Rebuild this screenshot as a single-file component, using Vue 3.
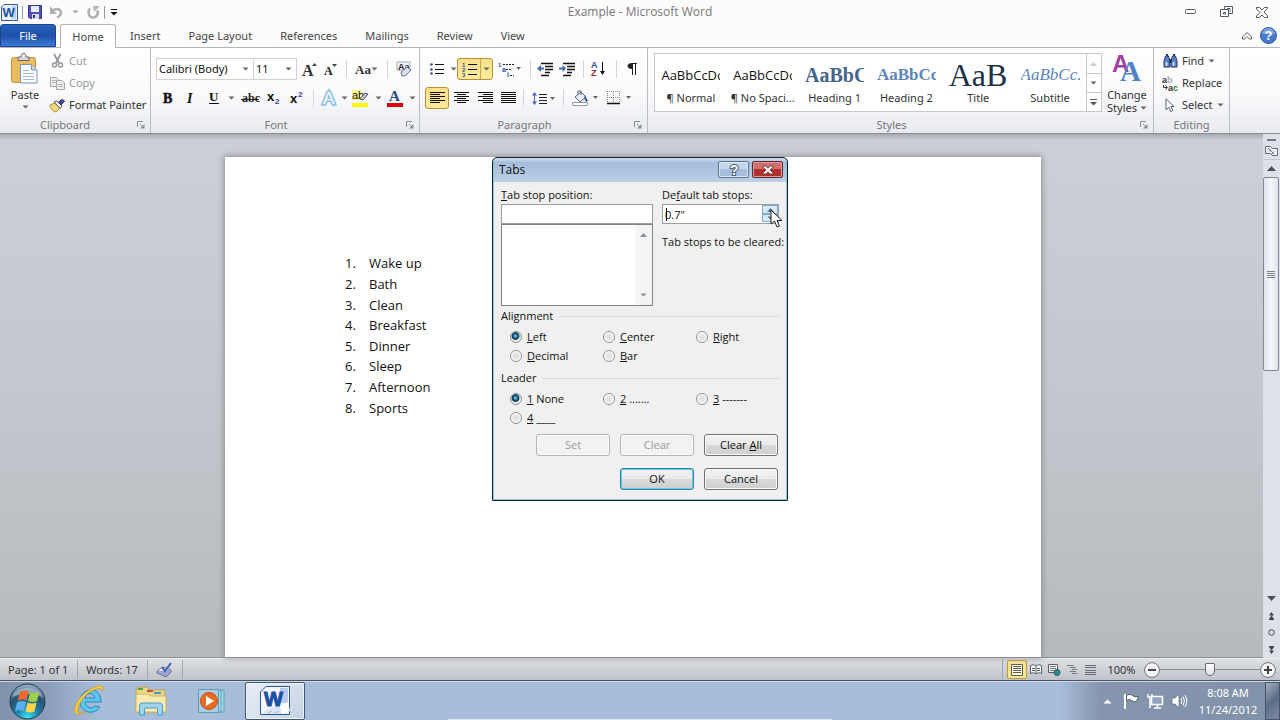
<script setup>
import { h, ref } from 'vue'

const lines = (rows) => `<path d="${rows.map(([x1, x2, y]) => `M${x1} ${y}.5H${x2}`).join('')}" stroke="#111" fill="none"/>`
const glyph = (x, y, size, color, text, extra = '') =>
  `<text x="${x}" y="${y}" font-size="${size}" fill="${color}" ${extra}>${text}</text>`
const serif = 'font-family="Liberation Serif" font-weight="bold"'
const sans = 'font-family="Liberation Sans" font-weight="bold"'

const icons = {
  arrow: [7, 4, '<path d="M0.5 0.5h6l-3 3z" fill="#666"/>'],
  launcher: [8, 8, '<path d="M.5 6V.5H6M3 3l3 3" stroke="#8a8d94" fill="none"/><path d="M7.5 3v4.500H3z" fill="#8a8d94"/>'],
  word: [17, 17, `<path d="M3 .5h13.500v16H.5V3z" fill="#e9f1fb" stroke="#2c5a9c"/><path d="M11 2h4v13h-4z" fill="#b9d1ee"/>${glyph(1.5, 13, 13, '#1c55a5', 'W', sans)}`],
  save: [14, 14, '<path d="M.5.5h13v13H2l-1.500-1.500z" fill="#5350b5" stroke="#37348c"/><path d="M3 1h8v6H3z" fill="#e8ecff"/><path d="M4 9h7v5H4z" fill="#d5d8ee"/><path d="M5 10h2v3H5z" fill="#37348c"/>'],
  undo: [14, 12, '<path d="M3 4.500c4-3 8-1 8 2 0 2-2 4-4 5" stroke="#aeb0b4" stroke-width="2.500" fill="none"/><path d="M0 0v8h7z" fill="#aeb0b4"/>'],
  redo: [13, 13, '<path d="M3 2.500C0 6 2 11.500 6 11.500S12 7 10 4.500" stroke="#aeb0b4" stroke-width="2.500" fill="none"/><path d="M6 0h7l-6 6z" fill="#b5b7bb"/>'],
  custom: [8, 7, '<path d="M1 .5h6" stroke="#111"/><path d="M.5 3h7L4 6.500z" fill="#111"/>'],
  minimize: [12, 6, '<rect x=".5" y=".5" width="10" height="4" rx="1" fill="#fff" stroke="#555a63"/>'],
  restore: [13, 12, '<path d="M4.500.5h8v7h-8z" fill="#fff" stroke="#555a63"/><path d="M.5 3.500h8v7h-8z" fill="#fff" stroke="#555a63"/><path d="M3.500 6.500h2v1.500h-2z" stroke="#555a63" fill="none"/><path d="M7 2.500h3v3" stroke="#555a63" fill="none"/>'],
  close: [12, 11, '<path d="M.5.5h3l2.500 2.500L8.500.5h3v1L8 5l3.500 4v1.500h-3L6 8l-2.500 2.500h-3V9L4 5.500.5 2z" fill="#fff" stroke="#555a63"/>'],
  caret: [10, 8, '<path d="M.5 5L5 .5 9.500 5v2h-2L5 4.500 2.500 7h-2z" fill="#fff" stroke="#555a63"/>'],
  help: [17, 17, `<circle cx="8.500" cy="8.500" r="8" fill="#4a78cb" stroke="#2b58a6"/><path d="M2 7a6.500 6 0 0 1 13 0z" fill="#7ea2e2"/>${glyph(4.6, 13, 13, '#fff', '?', sans)}`],
  paste: [28, 32, '<rect x=".5" y="4.500" width="24" height="25" rx="2" fill="#e8bd62" stroke="#c59542"/><path d="M7 7.500V4h3c0-5 5-5 5 0h3v3.500z" fill="#d4d6da" stroke="#67696e"/><circle cx="12.500" cy="3" r="1.200" fill="#fff"/><path d="M9.500 11.500h11l5.500 5.500v13H9.500z" fill="#fafcff" stroke="#8194b8"/><path d="M20.500 11.500V17H26" fill="#c9d7ed" stroke="#8194b8"/><path d="M12 17.500h6M12 20.500h11M12 23.500h11M12 26.500h11" stroke="#a8b8d4"/>'],
  cut: [11, 14, '<path d="M2 0l5 9M8.500 0L4 9" stroke="#96989d" stroke-width="1.800" fill="none"/><circle cx="2.500" cy="11" r="2" fill="none" stroke="#96989d" stroke-width="1.500"/><circle cx="8.500" cy="11" r="2" fill="none" stroke="#96989d" stroke-width="1.500"/>'],
  copy: [15, 13, '<path d="M.5.5h6L8.500 3v6.500h-8z" fill="#eee" stroke="#a4a6aa"/><path d="M6.500 3.500H12l2.500 2.500v6.500h-8z" fill="#eee" stroke="#a4a6aa"/><path d="M2 3.500h4M2 5.500h4M8 7.500h5M8 9.500h5" stroke="#b4b6ba"/>'],
  painter: [16, 13, '<path d="M1 6l5-2 5 5-4 4C4 12 1 10 1 6z" fill="#efd878" stroke="#b3933a"/><path d="M5 3l3-1 5 5-2 2.500z" fill="#f7f7fb" stroke="#555"/><path d="M9.500 3L13 .5l2.500 1.500L12 6z" fill="#4b4794" stroke="#302d69"/>'],
  grow: [15, 15, `${glyph(0, 14, 16, '#333', 'A', serif)}<path d="M10 4h5l-2.500-3z" fill="#444"/>`],
  shrink: [13, 13, `${glyph(0, 12, 12, '#222', 'A', serif)}<path d="M8 1h5l-2.500 3z" fill="#444"/>`],
  aa: [16, 13, glyph(0, 11, 13, '#333', 'Aa', serif)],
  clear: [17, 16, `<rect x="1" y="1" width="13" height="8" fill="#eef1f8" stroke="#a6adbf"/>${glyph(2, 8.5, 9, '#222', 'Aa', sans)}<path d="M5 11l6-5 4 3-6 6H6z" fill="#d9dff0" stroke="#6b7490"/>`],
  bold: [11, 12, glyph(1, 11, 14, '#111', 'B', `${serif} stroke="#111" stroke-width=".5"`)],
  italic: [10, 12, glyph(2, 11, 14, '#111', 'I', `${serif} font-style="italic"`)],
  under: [12, 14, `${glyph(1, 10, 13, '#111', 'U', serif)}<path d="M1 12.500h10" stroke="#111"/>`],
  strike: [18, 12, `${glyph(1, 10, 12, '#222', 'abc', serif)}<path d="M0 7.500h18" stroke="#222"/>`],
  sub: [14, 14, `${glyph(0, 10, 13, '#111', 'x', sans)}${glyph(8, 13, 8, '#3a3aa8', '2', sans)}`],
  sup: [14, 14, `${glyph(0, 12, 13, '#111', 'x', sans)}${glyph(8, 6, 8, '#3a3aa8', '2', sans)}`],
  effects: [16, 16, glyph(2, 14, 17, '#fff', 'A', 'font-family="Liberation Sans" stroke="#8ec3e6" stroke-width="3.500" paint-order="stroke"')],
  highlight: [18, 17, `<path d="M0 0h9v10H0z" fill="#f9f78c"/>${glyph(0, 9, 11, '#111', 'ab', 'font-family="Liberation Sans"')}<path d="M8 9l5-6 3 1-5 6z" fill="#c5cbdc" stroke="#555"/><path d="M0 13h16v4H0z" fill="#fdfd00"/>`],
  color: [16, 17, `${glyph(2, 11, 15, '#2f477f', 'A', serif)}<path d="M0 13h16v4H0z" fill="#e00008"/>`],
  bullets: [14, 12, '<path d="M5 1.500h9M5 6.500h9M5 10.500h9" stroke="#111"/><g fill="#3a4e8c"><circle cx="1.500" cy="1.500" r="1.300"/><circle cx="1.500" cy="6.500" r="1.300"/><circle cx="1.500" cy="10.500" r="1.300"/></g>'],
  numbers: [15, 15, `<path d="M6 2.500h9M6 7.500h9M6 12.500h9" stroke="#111"/>${glyph(0, 5, 6, '#33509b', '1', sans)}${glyph(0, 10, 6, '#33509b', '2', sans)}${glyph(0, 15, 6, '#33509b', '3', sans)}`],
  multi: [23, 15, `<path d="M5 2.500h11M8 7.500h6M12 13.500h4" stroke="#222" stroke-dasharray="2 1"/>${glyph(0, 5, 6, '#33509b', '1', sans)}${glyph(4, 10, 7, '#33509b', 'a', sans)}${glyph(9, 15, 7, '#33509b', 'i', sans)}<path d="M18 5h5l-2.500 3z" fill="#666"/>`],
  outdent: [16, 13, '<path d="M4 .5h12M8 3.500h8M8 6.500h8M8 9.500h5M4 12.500h8" stroke="#111" stroke-width="1.400"/><path d="M0 5.500L4 2v2.500h3v2H4V9z" fill="#4466b4"/>'],
  indent: [16, 13, '<path d="M4 .5h12M8 3.500h8M8 6.500h8M8 9.500h5M4 12.500h8" stroke="#111" stroke-width="1.400"/><path d="M7 5.500L3.500 2v2.500H0v2h3.500V9z" fill="#4466b4"/>'],
  sort: [15, 16, `${glyph(0, 7, 9, '#33509b', 'A', sans)}${glyph(0, 15, 9, '#9c2f3b', 'Z', sans)}<path d="M11.500 1v12" stroke="#111"/><path d="M9 10h5l-2.500 4z" fill="#111"/>`],
  pilcrow: [10, 13, '<path d="M5 0h5v1H9v11H8V1H6v11H5V6C-1 6-1 0 5 0z" fill="#222"/>'],
  left: [15, 12, lines([[0, 15, 0], [0, 10, 2], [0, 15, 4], [0, 10, 6], [0, 15, 8], [0, 10, 10]])],
  center: [15, 12, lines([[0, 15, 0], [3, 12, 2], [0, 15, 4], [3, 12, 6], [0, 15, 8], [3, 12, 10]])],
  right: [15, 12, lines([[0, 15, 0], [5, 15, 2], [0, 15, 4], [5, 15, 6], [0, 15, 8], [5, 15, 10]])],
  justify: [15, 12, lines([[0, 15, 0], [0, 15, 2], [0, 15, 4], [0, 15, 6], [0, 15, 8], [0, 15, 10]])],
  spacing: [23, 15, '<path d="M7 3.500h8M7 6.500h8M7 9.500h8M7 12.500h8" stroke="#222"/><path d="M2.500 3v9" stroke="#4466b4"/><path d="M0 4.500h5L2.500 1zM0 10.500h5L2.500 14z" fill="#4466b4"/><path d="M18 6h5l-2.500 3z" fill="#666"/>'],
  fill: [26, 17, '<path d="M3 7l6-5 5 5-6 5z" fill="#e8ecf6" stroke="#596683"/><path d="M6 4V1h3v4" fill="none" stroke="#596683"/><path d="M13 5l3 6-2 1-2-4z" fill="#3e61a9"/><path d="M.5 12.500h15v3H.5z" fill="#fff" stroke="#999"/><path d="M21 6h5l-2.500 3z" fill="#666"/>'],
  borders: [26, 14, '<path d="M.5 0v12M6.500 0v12M12.500 0v12M0 .5h13M0 6.500h13" stroke="#888" stroke-dasharray="1 1"/><path d="M0 12.500h13" stroke="#111" stroke-width="1.500"/><path d="M19 5h5l-2.500 3z" fill="#666"/>'],
  styles: [30, 28, `${glyph(0, 18, 24, '#a13fa0', 'A', sans)}${glyph(8, 27, 29, '#4d82cc', 'A', serif)}`],
  find: [15, 14, '<path d="M1 7l1.500-5h3L7 7v6H1zM8 7l1.500-5h3L14 7v6H8z" fill="#5a7fc6" stroke="#27396f"/><path d="M6 5h3v4H6zM3 0h2v2H3zM10 0h2v2h-2z" fill="#27396f"/><path d="M2.500 8h2v4h-2zM9.500 8h2v4h-2z" fill="#c7d8f5"/>'],
  replace: [16, 15, `${glyph(0, 7, 9, '#333', 'a', sans)}${glyph(5, 7, 9, '#aaa', 'b', sans)}${glyph(6, 15, 9, '#333', 'a', sans)}${glyph(11, 15, 9, '#2a8a2a', 'c', sans)}<path d="M1.500 9v2.500H5M3.500 9.500l2 2-2 2" stroke="#333" fill="none"/>`],
  select: [10, 14, '<path d="M1 .8v11l2.800-2.500 2 4.200 2-1-2-4H9z" fill="#fff" stroke="#596075"/>'],
  up: [9, 5, '<path d="M0 5h9L4.500 0z" fill="#4a4e57"/>'],
  down: [9, 5, '<path d="M0 0h9L4.500 5z" fill="#4a4e57"/>'],
  more: [8, 8, '<path d="M0 1.500h7" stroke="#555"/><path d="M0 4h7L3.500 7.500z" fill="#555"/>'],
  ruler: [13, 12, '<path d="M.5 1.500h5l2 2h5v7h-5l-2-2h-5z" fill="#f2f4f8" stroke="#666b75"/><path d="M3 3l6 6M4 6.500l2-2M7 8.500l2-2" stroke="#666b75"/>'],
  prev: [7, 8, '<path d="M1 3.500h5L3.500 0zM1 7h5L3.500 3.500z" fill="#444"/><path d="M1 7.500h5" stroke="#444"/>'],
  browse: [7, 7, '<circle cx="3.500" cy="3.500" r="2.800" fill="#d5d9df" stroke="#555"/>'],
  next: [7, 8, '<path d="M1 .5h5" stroke="#444"/><path d="M1 1h5L3.500 4.500zM1 4.500h5L3.500 8z" fill="#444"/>'],
  proof: [17, 15, '<path d="M1 9l6-4 8 3-5 6z" fill="#fff" stroke="#6b7397"/><path d="M1 9v2l9 4 5-5V8" fill="#9aa5cf" stroke="#6b7397"/><path d="M6 5l3 4 6-8" stroke="#3e5fb0" stroke-width="2" fill="none"/>'],
  print: [12, 12, '<path d="M.5.5h11v11H.5z" fill="#fffdf0" stroke="#5d5a45"/><path d="M2 2.500h8M2 4.500h8M2 6.500h8M2 8.500h8" stroke="#5d5a45"/>'],
  read: [12, 11, '<path d="M.5 1.500c2-1 4-1 5.500.5 1.500-1.500 3.500-1.500 5.500-.5v8c-2-1-4-1-5.500.5-1.500-1.500-3.500-1.500-5.500-.5z" fill="#f7f8fa" stroke="#5a5e66"/><path d="M6 2v8M2 4.500h3M2 6.500h3M7 4.500h3M7 6.500h3" stroke="#5a5e66"/>'],
  web: [13, 12, '<path d="M.5.5h9v8h-9z" fill="#f7f8fa" stroke="#5a5e66"/><path d="M2 2.500h6M2 4.500h6M2 6.500h4" stroke="#777"/><circle cx="9" cy="8.500" r="3" fill="#2c8c88" stroke="#285c6c"/>'],
  outline: [11, 10, '<path d="M0 .5h7M3 2.500h6M5 4.500h5M3 6.500h6M5 8.500h5" stroke="#777b82"/>'],
  draft: [11, 10, '<path d="M0 .5h11M0 2.500h11M0 5.500h11M0 7.500h11M0 9.500h11" stroke="#666a72"/>'],
  minus: [16, 16, '<circle cx="8" cy="8" r="7.400" fill="#f3f4f6" stroke="#6d7178"/><path d="M4 8h8" stroke="#444" stroke-width="2"/>'],
  plus: [16, 16, '<circle cx="8" cy="8" r="7.400" fill="#f3f4f6" stroke="#6d7178"/><path d="M4 8h8M8 4v8" stroke="#444" stroke-width="2"/>'],
  start: [37, 37, '<defs><radialGradient id="orb" cx=".5" cy=".95" r=".9"><stop offset="0" stop-color="#3fe0f2"/><stop offset=".35" stop-color="#1c84ad"/><stop offset=".7" stop-color="#28506f"/><stop offset="1" stop-color="#8fa9bd"/></radialGradient></defs><circle cx="18.500" cy="18.500" r="17.500" fill="url(#orb)" stroke="#26384c"/><path d="M3 14a16.500 14 0 0 1 31 0c-9-4-22-4-31 0z" fill="#c9d8e4" opacity=".5"/><path d="M11 9q4-2.500 8.500-.5l-2 9q-4.500-2-9 .5z" fill="#ec6a2e"/><path d="M21 9q4.500 2 9 0l-2 9q-4.500 2-9 0z" fill="#9ccf4a"/><path d="M8 19.500q4.500-2.500 9-.5l-2 9q-4.500-2-9 .5z" fill="#58aef0"/><path d="M18.500 19.500q4.500 2 9 0l-2 9q-4.500 2-9 0z" fill="#fbd447"/>'],
  ie: [34, 34, '<path d="M27 23c-6 9-20 6-20-6S24 2 27 12c1 3 1 5 1 6H12c1 7 8 7 10 4z M12 14h10c-1-6-9-6-10 0z" fill="#5ec5ee" stroke="#2488bd" fill-rule="evenodd"/><path d="M4 30C-3 27 6 12 16 6s17-6 13 2c1-5-5-4-12 0S3 24 5 28c1 2 5 1 8-1-3 3-7 4-9 3z" fill="#f6cd3e" stroke="#c6981e" stroke-width=".7"/>'],
  folder: [34, 32, '<path d="M2 5l2-3h9l2 3h16v22H2z" fill="#edd787" stroke="#b99f4c"/><path d="M4 3h5v2H4z" fill="#48a852"/><path d="M13 5h6v2h-6z" fill="#c94c3f"/><path d="M20 7h7v2h-7z" fill="#4a91d4"/><path d="M2 9h12l3 2h15v16H2z" fill="#f8eab0" stroke="#cbb468"/><path d="M5.500 30V21q0-3 3-3h17q3 0 3 3v9h-5v-6q0-1-1-1h-11q-1 0-1 1v6z" fill="#9fd4ec" stroke="#509bc2"/>'],
  player: [28, 26, '<path d="M10 2h16v22H10zM8 2h15v22H8z" fill="#a5d7e6" stroke="#5ba4bd"/><path d="M.5 1.500h20v23H.5z" fill="#a9cfe4" stroke="#6898b6"/><circle cx="11" cy="13" r="8.500" fill="#ea6a24" stroke="#c24e12"/><path d="M8 8v10l8-5z" fill="#fff"/>'],
  wordbig: [30, 30, `<path d="M6 .5h23.500v28H.5V6z" fill="#f4f8fe" stroke="#2d5499"/><path d="M20 2h8v15h-8z" fill="#b8c9ea"/><path d="M4 25l14-6 10 6-2 3H4z" fill="#dde5f5"/>${glyph(4, 20, 20, '#1d4fa3', 'W', `${sans} stroke="#1d4fa3"`)}<path d="M20 20l8-4 2 9-8 3z" fill="#fff"/><path d="M8 27l4-2M15 27l4-2" stroke="#9fb2da"/>`],
  trayup: [9, 5, '<path d="M.5 4.500h8L4.500.5z" fill="#fff"/>'],
  flag: [17, 17, '<path d="M2 1v15" stroke="#fff" stroke-width="2"/><path d="M3.500 2q4-1.500 6 .5t6 1l-2 5q-3 1-5-1t-5 0z" fill="#fff" stroke="#4c5c74"/>'],
  network: [16, 16, '<path d="M4.500 3.500h11v8h-11z" fill="#8fa4bd" stroke="#fff" stroke-width="1.500"/><path d="M7 15h7M10.500 12v3" stroke="#fff" stroke-width="1.500"/><path d="M1 1v3h4V1M3 4v11" stroke="#fff" stroke-width="1.500" fill="none"/>'],
  speaker: [16, 16, '<path d="M1 5h3l4-4v14l-4-4H1z" fill="#fff" stroke="#4c5c74" stroke-width=".6"/><path d="M10 5q2 3 0 6M12 3.500q3 4.500 0 9M14 2q3.500 6 0 12" stroke="#fff" fill="none"/>'],
  dlghelp: [12, 14, glyph(2, 12, 14, '#fff', '?', `${sans} stroke="#4c5f7a" stroke-width="2" paint-order="stroke"`)],
  dlgclose: [12, 10, '<path d="M1 1h3l2 2.200L8 1h3v1L8 5l3 3v1H8L6 6.800 4 9H1V8l3-3-3-3z" fill="#fff" stroke="#5f3236" stroke-width=".8"/>'],
  grip: [8, 7, '<path d="M0 .5h8M0 2.500h8M0 4.500h8M0 6.500h8" stroke="#7a808e"/>'],
  small: [7, 4, '<path d="M0 4h7L3.500 0z" fill="#56708f"/>'],
  cursor: [13, 19, '<path d="M1 1v14l3.500-3 2.500 6 2.500-1-2.500-5.500H12z" fill="#fff" stroke="#222"/>'],
}

const Icon = ({ name }) => {
  const [w, ht, body] = icons[name]
  return h('svg', { width: w, height: ht, viewBox: `0 0 ${w} ${ht}`, 'aria-hidden': 'true', innerHTML: body })
}
Icon.props = ['name']

const tabs = ['Insert', 'Page Layout', 'References', 'Mailings', 'Review', 'View']
const font1 = [['grow', 'Grow Font'], ['shrink', 'Shrink Font'], null, ['aa', 'Change Case', 1], null, ['clear', 'Clear Formatting']]
const font2 = [['bold', 'Bold'], ['italic', 'Italic'], ['under', 'Underline'], ['arrow', 'Underline options'], ['strike', 'Strikethrough'], ['sub', 'Subscript'], ['sup', 'Superscript'], null, ['effects', 'Text Effects'], ['arrow', 'Text Effects options'], ['highlight', 'Highlight'], ['arrow', 'Highlight options'], ['color', 'Font Color'], ['arrow', 'Font Color options']]
const para1 = [['bullets', 'Bullets'], ['arrow', 'Bullets options'], ['numbers', 'Numbering', 2], ['multi', 'Multilevel List'], null, ['outdent', 'Decrease Indent'], ['indent', 'Increase Indent'], null, ['sort', 'Sort'], null, ['pilcrow', 'Show Marks']]
const para2 = [['left', 'Align Left', 3], ['center', 'Center'], ['right', 'Align Right'], ['justify', 'Justify'], null, ['spacing', 'Line Spacing'], null, ['fill', 'Shading'], ['borders', 'Borders']]
const gallery = [
  ['normal', 'AaBbCcDc', '¶ Normal'],
  ['normal', 'AaBbCcDc', '¶ No Spaci...'],
  ['h1', 'AaBbCc', 'Heading 1'],
  ['h2', 'AaBbCc', 'Heading 2'],
  ['title', 'AaB', 'Title'],
  ['subtitle', 'AaBbCc.', 'Subtitle'],
]
const items = ['Wake up', 'Bath', 'Clean', 'Breakfast', 'Dinner', 'Sleep', 'Afternoon', 'Sports']
const aligns = [['L', 'eft'], ['C', 'enter'], ['R', 'ight'], ['D', 'ecimal'], ['B', 'ar']]
const leaders = [['1', ' None'], ['2', ' .......'], ['3', ' -------'], ['4', ' ____']]
const align = ref('Left')
const leader = ref('1')
const zoom = ref(50)
</script>

<template>
  <div class="screen">
    <header class="titlebar">
      <div class="quick">
        <Icon name="word" /><i class="bar" />
        <button aria-label="Save"><Icon name="save" /></button>
        <button aria-label="Undo"><Icon name="undo" /></button>
        <button class="faded" aria-label="Undo options"><Icon name="arrow" /></button>
        <button aria-label="Redo"><Icon name="redo" /></button><i class="bar" />
        <button aria-label="Customize"><Icon name="custom" /></button>
      </div>
      <h1>Example - Microsoft Word</h1>
      <div class="wincontrols">
        <button aria-label="Minimize"><Icon name="minimize" /></button>
        <button aria-label="Restore"><Icon name="restore" /></button>
        <button aria-label="Close"><Icon name="close" /></button>
      </div>
    </header>

    <nav class="tabs">
      <button class="file">File</button>
      <button class="active">Home</button>
      <button v-for="t in tabs" :key="t">{{ t }}</button>
      <span class="tabhelp">
        <button aria-label="Minimize ribbon"><Icon name="caret" /></button>
        <button aria-label="Help"><Icon name="help" /></button>
      </span>
    </nav>

    <section class="ribbon">
      <div class="group clipboard">
        <div class="content">
          <button class="paste"><Icon name="paste" /><span>Paste</span><Icon name="arrow" /></button>
          <div class="stack">
            <button disabled><span class="ic"><Icon name="cut" /></span>Cut</button>
            <button disabled><span class="ic"><Icon name="copy" /></span>Copy</button>
            <button><span class="ic"><Icon name="painter" /></span>Format Painter</button>
          </div>
        </div>
        <footer><span>Clipboard</span><Icon name="launcher" /></footer>
      </div>

      <div class="group fontgroup">
        <div class="content rows">
          <div class="row f1">
            <label class="combo"><select aria-label="Font"><option>Calibri (Body)</option></select><Icon name="arrow" /></label>
            <label class="combo"><select aria-label="Font size"><option>11</option></select><Icon name="arrow" /></label>
            <template v-for="(b, i) in font1" :key="i">
              <i v-if="!b" class="sep" />
              <button v-else :aria-label="b[1]"><Icon :name="b[0]" /><Icon v-if="b[2]" name="arrow" /></button>
            </template>
          </div>
          <div class="row f2">
            <template v-for="(b, i) in font2" :key="i">
              <i v-if="!b" class="sep" />
              <button v-else :aria-label="b[1]"><Icon :name="b[0]" /></button>
            </template>
          </div>
        </div>
        <footer><span>Font</span><Icon name="launcher" /></footer>
      </div>

      <div class="group paragraph">
        <div class="content rows">
          <div class="row p1">
            <template v-for="(b, i) in para1" :key="i">
              <i v-if="!b" class="sep" />
              <button v-else :class="{ on: b[2], split: b[2] === 2 }" :aria-label="b[1]">
                <Icon :name="b[0]" /><span v-if="b[2]" class="drop"><Icon name="arrow" /></span>
              </button>
            </template>
          </div>
          <div class="row p2">
            <template v-for="(b, i) in para2" :key="i">
              <i v-if="!b" class="sep" />
              <button v-else :class="{ on: b[2] }" :aria-label="b[1]"><Icon :name="b[0]" /></button>
            </template>
          </div>
        </div>
        <footer><span>Paragraph</span><Icon name="launcher" /></footer>
      </div>

      <div class="group stylesgroup">
        <div class="content">
          <div class="gallery">
            <button v-for="g in gallery" :key="g[2]" class="style">
              <span class="preview" :class="g[0]">{{ g[1] }}</span><span>{{ g[2] }}</span>
            </button>
            <div class="gscroll">
              <button class="dim" aria-label="Previous styles"><Icon name="small" /></button>
              <button aria-label="Next styles"><Icon name="arrow" /></button>
              <button aria-label="More styles"><Icon name="more" /></button>
            </div>
          </div>
          <button class="change"><Icon name="styles" /><span>Change</span><span>Styles <Icon name="arrow" /></span></button>
        </div>
        <footer><span>Styles</span><Icon name="launcher" /></footer>
      </div>

      <div class="group editing">
        <div class="content stack">
          <button><span class="ic"><Icon name="find" /></span>Find <Icon name="arrow" /></button>
          <button><span class="ic"><Icon name="replace" /></span>Replace</button>
          <button><span class="ic"><Icon name="select" /></span>Select <Icon name="arrow" /></button>
        </div>
        <footer><span>Editing</span></footer>
      </div>
    </section>

    <main class="workspace">
      <div class="canvas">
        <article class="page">
          <ol>
            <li v-for="(t, i) in items" :key="t"><span>{{ i + 1 }}.</span>{{ t }}</li>
          </ol>
        </article>
      </div>
      <div class="scrollbar">
        <i class="splitter" />
        <button class="rulerbtn" aria-label="View ruler"><Icon name="ruler" /></button>
        <button aria-label="Scroll up"><Icon name="up" /></button>
        <div class="track"><div class="thumb"><Icon name="grip" /></div></div>
        <button aria-label="Scroll down"><Icon name="down" /></button>
        <button aria-label="Previous page"><Icon name="prev" /></button>
        <button aria-label="Browse object"><Icon name="browse" /></button>
        <button aria-label="Next page"><Icon name="next" /></button>
      </div>

      <form class="dialog" role="dialog" aria-labelledby="dlg-title" @submit.prevent>
        <div class="dlgbar">
          <h2 id="dlg-title">Tabs</h2>
          <button type="button" class="q" aria-label="Help"><Icon name="dlghelp" /></button>
          <button type="button" class="x" aria-label="Close"><Icon name="dlgclose" /></button>
        </div>
        <div class="dlgbody">
          <div class="cols">
            <div class="col">
              <label for="pos"><u>T</u>ab stop position:</label>
              <input id="pos" type="text">
              <div class="listbox">
                <div class="lscroll"><Icon name="small" /><Icon name="arrow" /></div>
              </div>
            </div>
            <div class="col">
              <label for="def">De<u>f</u>ault tab stops:</label>
              <div class="spin">
                <input id="def" type="text" value="0.7&quot;"><i class="textcaret" />
                <div class="spinbtns">
                  <button type="button" aria-label="Increase"><Icon name="small" /></button>
                  <button type="button" aria-label="Decrease"><Icon name="arrow" /></button>
                </div>
                <span class="cursor"><Icon name="cursor" /></span>
              </div>
              <p>Tab stops to be cleared:</p>
            </div>
          </div>
          <fieldset>
            <legend>Alignment</legend>
            <div class="radios">
              <label v-for="a in aligns" :key="a[0]"><input v-model="align" type="radio" name="align" :value="a[0] + a[1]"><span><u>{{ a[0] }}</u>{{ a[1] }}</span></label>
            </div>
          </fieldset>
          <fieldset>
            <legend>Leader</legend>
            <div class="radios">
              <label v-for="l in leaders" :key="l[0]"><input v-model="leader" type="radio" name="leader" :value="l[0]"><span><u>{{ l[0] }}</u>{{ l[1] }}</span></label>
            </div>
          </fieldset>
          <div class="actions">
            <button type="button" disabled>Set</button>
            <button type="button" disabled>Clear</button>
            <button type="button"><span>Clear <u>A</u>ll</span></button>
          </div>
          <div class="actions">
            <button type="submit" class="ok">OK</button>
            <button type="button">Cancel</button>
          </div>
        </div>
      </form>
    </main>

    <footer class="status">
      <span class="cell">Page: 1 of 1</span>
      <span class="cell">Words: 17</span>
      <button class="cell" aria-label="Proofing"><Icon name="proof" /></button>
      <div class="views">
        <button class="on" aria-label="Print Layout"><Icon name="print" /></button>
        <button aria-label="Full Screen Reading"><Icon name="read" /></button>
        <button aria-label="Web Layout"><Icon name="web" /></button>
        <button aria-label="Outline"><Icon name="outline" /></button>
        <button aria-label="Draft"><Icon name="draft" /></button>
      </div>
      <span class="pct">100%</span>
      <button aria-label="Zoom out"><Icon name="minus" /></button>
      <input v-model="zoom" type="range" aria-label="Zoom">
      <button aria-label="Zoom in"><Icon name="plus" /></button>
    </footer>

    <footer class="taskbar">
      <button class="orb" aria-label="Start"><Icon name="start" /></button>
      <button aria-label="Internet Explorer"><Icon name="ie" /></button>
      <button aria-label="Explorer"><Icon name="folder" /></button>
      <button aria-label="Media Player"><Icon name="player" /></button>
      <button class="running" aria-label="Word"><Icon name="wordbig" /></button>
      <div class="tray">
        <button aria-label="Show hidden icons"><Icon name="trayup" /></button>
        <button aria-label="Action Center"><Icon name="flag" /></button>
        <button aria-label="Network"><Icon name="network" /></button>
        <button aria-label="Volume"><Icon name="speaker" /></button>
        <div class="clock"><span>8:08 AM</span><span>11/24/2012</span></div>
        <button class="desktop" aria-label="Show desktop" />
      </div>
    </footer>
  </div>
</template>

<style>
body { overflow: hidden; }
</style>

<style scoped>
* { box-sizing: border-box; }
.screen { display: flex; flex-direction: column; height: 100vh; font: 11px/16px "Noto Sans", "Open Sans", sans-serif; color: #333; background: #fcfcfd; }
button { display: flex; align-items: center; justify-content: center; padding: 0; border: 0; background: none; font: inherit; color: inherit; white-space: nowrap; }
svg { flex: none; display: block; overflow: visible; }
h1, h2, p, ol { margin: 0; padding: 0; font-weight: normal; }

.titlebar { display: grid; grid-template-columns: 1fr auto 1fr; height: 24px; align-items: center; }
.titlebar h1 { font-family: "Open Sans", sans-serif; font-size: 12px; color: #777; }
.quick { display: flex; align-items: center; gap: 8px; padding-left: 1px; }
.bar { width: 1px; height: 13px; margin: 0 -3px 0 -4px; background: #999; }
.faded { opacity: .6; }
.wincontrols { display: flex; justify-content: flex-end; gap: 23px; padding-right: 12px; }

.tabs { display: flex; height: 24px; border-bottom: 1px solid #b2b5bb; }
.tabs > button { padding: 0 14px; color: #444; }
.tabs > .file { width: 56px; margin-right: 4px; padding: 0; color: #fff; background: linear-gradient(#2b63bd, #1f50a8 50%, #3a79d6); border: 1px solid #1b458f; border-radius: 3px 3px 0 0; }
.tabs > .active { width: 56px; margin-bottom: -1px; padding: 0; background: #fff; border: 1px solid #b2b5bb; border-bottom: 0; border-radius: 3px 3px 0 0; }
.tabhelp { display: flex; align-items: center; gap: 8px; margin-left: auto; padding-right: 3px; }

.ribbon { display: flex; height: 86px; padding-right: 50px; background: linear-gradient(#fff, #fbfbfc 50%, #e8eaef); border-bottom: 1px solid #8a8d94; }
.group { display: flex; flex-direction: column; flex: none; border-right: 1px solid #b9bcc4; }
.group .content { flex: 1; }
.group > footer { display: grid; grid-template-columns: 8px 1fr 8px; height: 17px; padding: 0 5px; align-items: center; color: #777; }
.group > footer span { grid-column: 2; text-align: center; }
.clipboard { width: 151px; }
.fontgroup { width: 269px; }
.paragraph { width: 228px; }
.stylesgroup { flex: 1; }
.editing { width: 76px; }
.clipboard > footer { padding-right: 5px; }
.clipboard > footer span { padding-right: 20px; }
.fontgroup > footer span { padding-right: 18px; }
.paragraph > footer span { padding-right: 18px; }
.stylesgroup > footer span { padding-right: 18px; }
.clipboard .content { display: flex; padding: 2px 0 0 4px; }
.paste { flex-direction: column; width: 42px; padding-top: 3px; justify-content: flex-start; }
.paste span { margin: 2px 0; line-height: 16px; }
.stack { display: flex; flex-direction: column; align-items: flex-start; padding: 2px 0 0; }
.clipboard .stack { padding: 0 0 0 3px; }
.stack button { height: 22px; gap: 4px; }
.stack button:disabled { color: #999; }
.ic { display: flex; width: 16px; justify-content: center; }
.rows { display: flex; flex-direction: column; gap: 7px; padding: 10px 4px 0 5px; }
.row { display: grid; height: 22px; }
.f1 { grid-template-columns: 97px 43px 26px 16px 16px 24px 18px 16px; }
.f2 { grid-template-columns: 22px 24px 24px 10px 28px 20px 26px 6px 26px 4px 30px 4px 30px 4px; }
.p1 { grid-template-columns: 24px 8px 36px 32px 10px 20px 24px 8px 22px 14px 18px; }
.p2 { grid-template-columns: 24px 24px 24px 22px 8px 32px 8px 36px 34px; }
.combo { display: flex; align-items: center; margin-right: -1px; padding-right: 4px; background: #fff; border: 1px solid #d0d2d7; }
.combo select { flex: 1; min-width: 0; padding: 0 0 0 2px; border: 0; background: none; appearance: none; font: inherit; color: #111; }
.sep { justify-self: center; width: 1px; height: 18px; margin-top: 2px; background: #d3d5da; }
.row .on { border: 1px solid #b98f37; border-radius: 3px; background: linear-gradient(#fbe08a, #fdeb9c); }
.p2 .on .drop { display: none; }
.split { justify-content: space-between; padding-left: 4px; }
.drop { display: flex; align-items: center; height: 100%; padding: 0 2px; border-left: 1px solid #c9a550; }

.stylesgroup .content { display: flex; padding: 5px 1px 4px 6px; }
.gallery { display: flex; flex: 1; background: #fff; border: 1px solid #c6c9cf; overflow: hidden; }
.style { flex: 1; flex-direction: column; justify-content: flex-start; min-width: 0; }
.preview { display: flex; align-items: center; justify-content: flex-start; width: 59px; height: 30px; margin-top: 6px; overflow: hidden; color: #111; font-family: "Open Sans", sans-serif; font-size: 13px; line-height: 30px; }
.preview.h1, .preview.h2, .preview.title, .preview.subtitle { font-family: "Liberation Serif", serif; color: #44648e; }
.preview.h1 { font-size: 20px; font-weight: bold; }
.preview.h2 { font-size: 17px; font-weight: bold; color: #5d86b8; }
.preview.title { font-size: 32px; color: #1d3149; }
.preview.subtitle { font-size: 17px; font-style: italic; color: #5d86b8; }
.gscroll { display: grid; grid-template-rows: 1fr 1fr 1fr; width: 15px; border-left: 1px solid #c6c9cf; }
.gscroll button + button { border-top: 1px solid #c6c9cf; }
.dim { opacity: .35; }
.change { flex-direction: column; width: 50px; padding-top: 1px; margin-bottom: -4px; justify-content: flex-start; line-height: 13px; }
.change svg + span { margin-top: 6px; }
.change span { display: flex; align-items: center; gap: 3px; }
.editing .stack { padding-left: 8px; }
.editing .stack button { gap: 4px; }

.workspace { position: relative; display: flex; flex: 1; min-height: 0; background: linear-gradient(#a9abb1, #cdcfd7 6px, #c4c7cd 50%, #b6b9bd); }
.canvas { display: flex; flex: 1; justify-content: center; padding: 23px 0 0 3px; border-bottom: 1px solid #8c8f95; }
.page { width: 816px; padding: 96px 120px; background: #fff; box-shadow: 0 0 6px 1px #8b8d92; }
.page ol { display: grid; grid-auto-rows: 1fr; height: 165px; }
.page li { display: flex; align-items: center; font-family: "Open Sans", sans-serif; font-size: 13px; color: #111; list-style: none; }
.page li span { width: 24px; }
.scrollbar { display: flex; flex-direction: column; width: 17px; background: #dfe1e8; }
.scrollbar button { height: 17px; }
.splitter { width: 9px; height: 2px; margin: 5px auto 1px; background: #777c86; }
.scrollbar .rulerbtn { height: 18px; border-bottom: 1px solid #c4c7cf; }
.track { flex: 1; }
.thumb { display: flex; align-items: center; justify-content: center; width: 16px; height: 47%; border: 1px solid #83889a; border-radius: 2px; background: linear-gradient(90deg, #e2e5ee, #f6f7fb 50%, #e0e3ee); }

.dialog { position: absolute; top: 23px; left: 50%; width: 296px; margin-left: -148px; border: 1px solid #16242c; border-radius: 5px 5px 0 0; background: #f0f0f0; font: 11px/14px "Open Sans", "Noto Sans", sans-serif; color: #111; box-shadow: inset 0 0 0 1px #8fc6d4; }
.dlgbar { display: flex; height: 24px; margin: 0 1px; padding: 0 3px 0 5px; gap: 3px; border-radius: 4px 4px 0 0; background: linear-gradient(#cfdff0, #a4bddb 20%, #bcd0e6); }
.dlgbar h2 { flex: 1; align-self: center; font-size: 12px; }
.dlgbar button { width: 31px; height: 17px; margin-top: 3px; border: 1px solid #5d7491; border-radius: 2px; box-shadow: inset 0 0 0 1px #d9e6f4; background: linear-gradient(#c4d6ea 50%, #a6bfdb 50%); }
.dlgbar .x { border-color: #5c2a30; box-shadow: inset 0 0 0 1px #dc9a9a; background: linear-gradient(#d06f6c 50%, #b12f2c 50%); }
.dlgbody { padding: 6px 8px 10px; }
.cols { display: grid; grid-template-columns: 152px minmax(0, 1fr); gap: 9px; }
.col { display: flex; flex-direction: column; }
.col label { margin-bottom: 2px; }
.col input { width: 100%; height: 20px; padding: 0 2px; border: 1px solid #9a9da3; background: #fff; font: inherit; color: #111; outline: 0; }
.listbox { display: flex; justify-content: flex-end; height: 82px; border: 1px solid #7f8388; background: #fff; }
.lscroll { display: flex; flex-direction: column; align-items: center; justify-content: space-between; width: 17px; padding: 8px 0; background: #f1f1f1; opacity: .75; }
.spin { position: relative; display: flex; height: 20px; border: 1px solid #9a9da3; background: #fff; }
.col .spin input { flex: 1; min-width: 0; height: 18px; border: 0; }
.spinbtns { display: grid; grid-template-rows: 9px 8px; width: 16px; }
.spinbtns button { border: 1px solid #87a9c8; background: #d6eaf8; }
.textcaret { position: absolute; left: 3px; top: 3px; width: 1px; height: 13px; background: #000; }
.cursor { position: absolute; left: 107px; top: 4px; }
.col p { margin-top: 11px; white-space: nowrap; }
fieldset { min-width: 0; margin: 0; padding: 0; border: 0; }
.cols + fieldset { margin-top: 3px; }
fieldset + fieldset { margin-top: 6px; }
legend { display: flex; align-items: center; gap: 6px; width: 100%; padding: 0; height: 14px; }
legend::after { content: ""; flex: 1; height: 1px; background: #d9dadb; }
.radios { display: grid; grid-template-columns: 93px 93px 1fr; grid-auto-rows: 19px; padding: 4px 0 0 9px; }
.radios label { display: flex; align-items: center; gap: 5px; white-space: nowrap; }
.radios input { width: 12px; height: 12px; margin: 0; appearance: none; border: 1px solid #8e9093; border-radius: 50%; background: radial-gradient(#e4e4e4 40%, #fff 65%); }
.radios input:checked { background: radial-gradient(circle at 45% 40%, #5cc3d8 8%, #12486b 32%, #123a57 42%, #eee 54%); }
.actions { display: flex; justify-content: flex-end; gap: 10px; margin-top: 7px; padding-right: 1px; }
.actions + .actions { margin-top: 12px; }
.actions button { width: 74px; height: 22px; border: 1px solid #707070; border-radius: 3px; background: linear-gradient(#f3f3f3, #ebebeb 50%, #dadada 50%, #cfcfcf); box-shadow: inset 0 0 0 1px #fcfcfc; }
.actions button:disabled { color: #9b9b9b; border-color: #b4b5b7; background: #f2f2f2; }
.actions .ok { border-color: #3c7fa3; box-shadow: inset 0 0 0 1px #5dcff0; }

.status { display: flex; align-items: center; height: 23px; padding-right: 4px; background: linear-gradient(#dfe1e6, #bfc2c8); border-top: 1px solid #eceef1; border-bottom: 1px solid #4b5563; }
.cell { display: flex; align-items: center; height: 19px; padding: 0 9px 0 8px; border-right: 1px solid #a3a6ad; }
.views { display: flex; align-items: center; margin-left: auto; padding-left: 4px; border-left: 1px solid #a3a6ad; }
.views button { width: 18px; height: 19px; }
.views .on { width: 20px; border: 1px solid #c29a3a; border-radius: 2px; background: #fbe48e; }
.pct { width: 45px; text-align: center; }
.status input { width: 100px; height: 18px; margin: 0; appearance: none; background: linear-gradient(#8b8f96, #8b8f96) center / 100% 1px no-repeat; }
.status input::-webkit-slider-thumb { appearance: none; width: 10px; height: 13px; background: linear-gradient(#fff, #dcdfe4); border: 1px solid #666a72; border-radius: 1px 1px 5px 5px; }

.taskbar { position: relative; display: flex; height: 39px; background: linear-gradient(90deg, #8192ab 0, #8b9db8 45px, #a8bdd9 100px, #a8bdd9 1060px, #8595ad 1100px, #8192ab); border-top: 1px solid #cbd8e8; }
.taskbar > button { width: 61px; }
.taskbar > .orb { width: 54px; margin-right: 5px; }
.taskbar > .running { width: 60px; margin-left: 3px; border: 1px solid #45566f; border-radius: 2px; background: linear-gradient(135deg, #e8eef6, #c5d2e5); box-shadow: inset 0 0 0 1px #eef3f9; }
.taskbar::after { content: ""; position: absolute; left: 35%; right: 35%; bottom: 0; height: 1px; background: #dbe7f5; }
.tray { display: flex; align-items: stretch; margin-left: auto; color: #fff; }
.tray button { width: 24px; }
.clock { display: flex; flex-direction: column; justify-content: center; width: 74px; text-align: center; line-height: 17px; }
.tray .desktop { width: 15px; border: 1px solid #45536a; background: linear-gradient(135deg, #a3afc0, #5c6d86 50%, #7c8ca4); }
</style>
